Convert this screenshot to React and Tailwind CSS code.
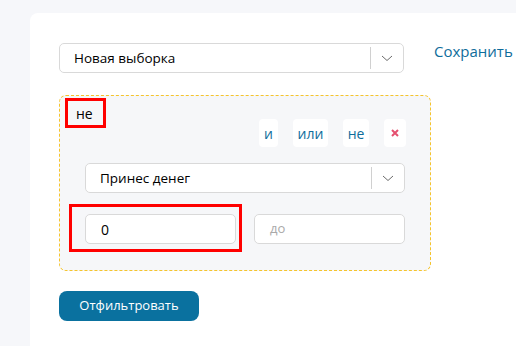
import React from "react";

function Chevron() {
  return (
    <svg width="12" height="7" viewBox="0 0 12 7" fill="none">
      <path d="M1 1l5 4.5L11 1" stroke="#6b6b6b" strokeWidth="1" />
    </svg>
  );
}

function Select({ label, className }) {
  return (
    <div className={"flex h-[30px] items-center rounded-[5px] border border-[#d9d9d9] bg-white " + className}>
      <div className="flex-1 pl-[14px] text-[13.5px] text-black">{label}</div>
      <div className="h-[22px] w-px bg-[#d0d0d0]" />
      <div className="flex w-[32px] items-center justify-center">
        <Chevron />
      </div>
    </div>
  );
}

export default function App() {
  return (
    <div className="min-h-[346px] w-[516px] overflow-hidden bg-[#f6f7fa] pl-[30px] pt-[13px]" style={{ fontFamily: '"Open Sans", "Noto Sans", sans-serif' }}>
      <div className="h-[333px] overflow-hidden rounded-tl-[8px] bg-white pl-[29px] pt-[30px]">
        <div className="flex items-center whitespace-nowrap">
          <Select label="Новая выборка" className="w-[345px] shrink-0" />
          <div className="ml-[30px] -mt-[13px] text-[15px] text-[#0f6d9b]">Сохранить сегмент</div>
        </div>

        <div className="relative mt-[22px] w-[372px] rounded-[7px] border border-dashed border-[#f5c42c] bg-[#f6f7f9] pb-[26px] pl-[25px] pr-[24px] pt-[23px]">
          <div className="absolute left-[5px] top-[2px] flex h-[30px] w-[41px] items-center border-[3px] border-[#ff0000] pl-[8px] text-[14px] text-black">
            не
          </div>
          <div className="flex justify-end gap-[15px] text-[14px] text-[#0f6d9b]">
            <div className="flex h-[28px] w-[19px] items-center justify-center rounded-[4px] bg-white">и</div>
            <div className="flex h-[28px] w-[35px] items-center justify-center rounded-[4px] bg-white">или</div>
            <div className="flex h-[28px] w-[26px] items-center justify-center rounded-[4px] bg-white">не</div>
            <div className="flex h-[28px] w-[22px] items-center justify-center rounded-[4px] bg-white">
              <svg width="8" height="8" viewBox="0 0 8 8">
                <path d="M1 1l6 6M7 1L1 7" stroke="#e5506f" strokeWidth="2" />
              </svg>
            </div>
          </div>
          <Select label="Принес денег" className="mt-[16px] w-[320px]" />
          <div className="relative mt-[21px] flex w-[320px] gap-[18px]">
            <div className="flex h-[30px] w-[151px] items-center rounded-[5px] border border-[#d9d9d9] bg-white pl-[15px] text-[14px] text-black">0</div>
            <div className="flex h-[30px] w-[151px] items-center rounded-[5px] border border-[#d9d9d9] bg-white pl-[15px] text-[13px] text-[#a9a9a9]">до</div>
            <div className="absolute -left-[16px] -top-[10px] h-[48px] w-[173px] border-[3px] border-[#ff0000]" />
          </div>
        </div>

        <div className="mt-[20px] flex h-[30px] w-[140px] items-center justify-center rounded-[8px] bg-[#0a719f] text-[13px] text-white">
          Отфильтровать
        </div>
      </div>
    </div>
  );
}
